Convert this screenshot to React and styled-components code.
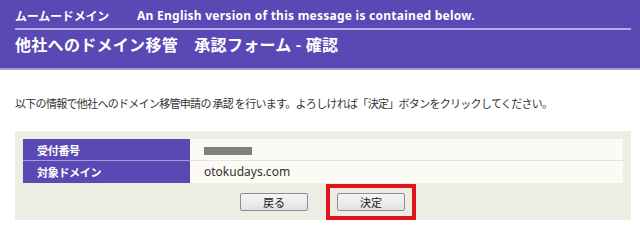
import React from "react";
import styled, { createGlobalStyle } from "styled-components";

const GlobalStyle = createGlobalStyle`
  html, body {
    margin: 0;
    padding: 0;
    background: #ffffff;
  }
  body {
    font-family: "Noto Sans", "Noto Sans CJK JP", sans-serif;
    color: #333333;
  }
`;

const Header = styled.header`
  background: #5a48b5;
  border-bottom: 2px solid #a7a1c9;
  color: #ffffff;
`;

const TopRow = styled.div`
  display: flex;
  align-items: center;
  gap: 28px;
  height: 25px;
  padding-top: 3px;
  margin: 0 9px 0 15px;
  border-bottom: 2px solid #b4ace6;
  font-weight: 700;
  font-size: 12px;
`;

const Brand = styled.span`
  font-family: "Noto Sans CJK JP", sans-serif;
  letter-spacing: -0.2px;
`;

const EnglishNote = styled.span`
  font-family: "Noto Sans", sans-serif;
  letter-spacing: 0.25px;
`;

const Title = styled.h1`
  margin: 0;
  padding: 4px 0 14px 15px;
  font-family: "Noto Sans CJK JP", sans-serif;
  font-size: 16px;
  line-height: 20px;
  font-weight: 700;
  letter-spacing: 0.3px;
`;

const Message = styled.p`
  margin: 25px 15px 20px;
  font-family: "Noto Sans CJK JP", sans-serif;
  font-size: 11px;
  line-height: 16px;
  letter-spacing: -0.7px;
  color: #333333;
`;

const Panel = styled.section`
  margin: 0 9px 0 15px;
  padding: 8px 8px 0;
  background: #edede3;
`;

const InfoTable = styled.table`
  width: 100%;
  border-collapse: collapse;
`;

const LabelCell = styled.th`
  width: 153px;
  height: 21px;
  padding: 0 0 0 14px;
  background: #5a48b5;
  color: #ffffff;
  text-align: left;
  font-family: "Noto Sans CJK JP", sans-serif;
  font-size: 11px;
  font-weight: 700;
  letter-spacing: -0.3px;
  border-bottom: 1px solid ${(p) => (p.$last ? "#5a48b5" : "#a39bd8")};
`;

const ValueCell = styled.td`
  height: 21px;
  padding: 0 0 0 14px;
  background: #fbfaf4;
  color: #333333;
  font-family: "Noto Sans", "Noto Sans CJK JP", sans-serif;
  font-size: 12px;
  border-bottom: 1px solid ${(p) => (p.$last ? "#fbfaf4" : "#e6e4da")};
`;

const Masked = styled.span`
  display: inline-block;
  width: 48px;
  height: 8px;
  background: #808080;
  vertical-align: middle;
`;

const ButtonBar = styled.div`
  display: flex;
  align-items: center;
  justify-content: center;
  gap: 18px;
  height: 37px;
  padding-left: 10px;
`;

const Highlight = styled.span`
  display: inline-flex;
  padding: 5px 7px;
  border: 4px solid #e0161f;
`;

const Button = styled.button`
  width: 68px;
  height: 18px;
  padding: 0;
  border: 1px solid #8c8c8c;
  border-radius: 2px;
  background: linear-gradient(#f6f6f6, #e2e2e2);
  color: #222222;
  font-family: "Noto Sans CJK JP", sans-serif;
  font-size: 11px;
  line-height: 16px;
`;

export default function App() {
  return (
    <>
      <GlobalStyle />
      <Header>
        <TopRow>
          <Brand>ムームードメイン</Brand>
          <EnglishNote>An English version of this message is contained below.</EnglishNote>
        </TopRow>
        <Title>他社へのドメイン移管　承認フォーム - 確認</Title>
      </Header>
      <Message>
        以下の情報で他社へのドメイン移管申請の 承認 を行います。よろしければ「決定」ボタンをクリックしてください。
      </Message>
      <Panel>
        <InfoTable>
          <tbody>
            <tr>
              <LabelCell>受付番号</LabelCell>
              <ValueCell>
                <Masked />
              </ValueCell>
            </tr>
            <tr>
              <LabelCell $last>対象ドメイン</LabelCell>
              <ValueCell $last>otokudays.com</ValueCell>
            </tr>
          </tbody>
        </InfoTable>
        <ButtonBar>
          <Button type="button">戻る</Button>
          <Highlight>
            <Button type="button">決定</Button>
          </Highlight>
        </ButtonBar>
      </Panel>
    </>
  );
}
